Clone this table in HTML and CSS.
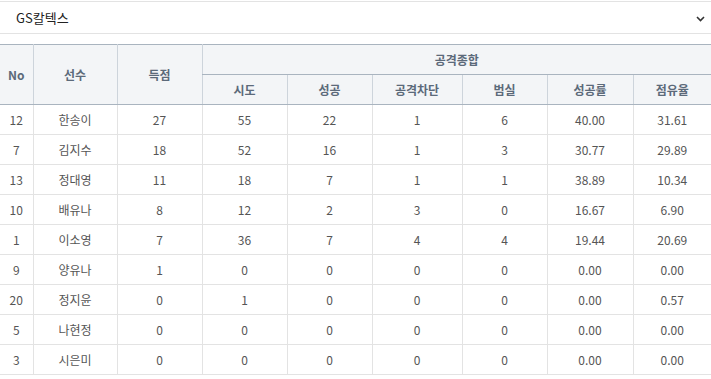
FILE: index.html
```html
<!DOCTYPE html>
<html lang="ko">
<head>
<meta charset="utf-8">
<link rel="stylesheet" href="styles.css">
</head>
<body>
<div class="team-select">
  <span class="team-name">GS칼텍스</span>
  <svg class="chevron" width="9" height="6" viewBox="0 0 9 6"><path d="M1 1 L4.5 4.5 L8 1" fill="none" stroke="#333" stroke-width="1.6"/></svg>
</div>
<table class="stats">
  <colgroup>
    <col style="width:33px"><col style="width:84px"><col style="width:85px"><col style="width:85px"><col style="width:85px"><col style="width:90px"><col style="width:85px"><col style="width:86px"><col style="width:78px">
  </colgroup>
  <thead>
    <tr>
      <th rowspan="2">No</th>
      <th rowspan="2">선수</th>
      <th rowspan="2">득점</th>
      <th colspan="6" class="group">공격종합</th>
    </tr>
    <tr>
      <th>시도</th><th>성공</th><th>공격차단</th><th>범실</th><th>성공률</th><th>점유율</th>
    </tr>
  </thead>
  <tbody>
    <tr><td>12</td><td>한송이</td><td>27</td><td>55</td><td>22</td><td>1</td><td>6</td><td>40.00</td><td>31.61</td></tr>
    <tr><td>7</td><td>김지수</td><td>18</td><td>52</td><td>16</td><td>1</td><td>3</td><td>30.77</td><td>29.89</td></tr>
    <tr><td>13</td><td>정대영</td><td>11</td><td>18</td><td>7</td><td>1</td><td>1</td><td>38.89</td><td>10.34</td></tr>
    <tr><td>10</td><td>배유나</td><td>8</td><td>12</td><td>2</td><td>3</td><td>0</td><td>16.67</td><td>6.90</td></tr>
    <tr><td>1</td><td>이소영</td><td>7</td><td>36</td><td>7</td><td>4</td><td>4</td><td>19.44</td><td>20.69</td></tr>
    <tr><td>9</td><td>양유나</td><td>1</td><td>0</td><td>0</td><td>0</td><td>0</td><td>0.00</td><td>0.00</td></tr>
    <tr><td>20</td><td>정지윤</td><td>0</td><td>1</td><td>0</td><td>0</td><td>0</td><td>0.00</td><td>0.57</td></tr>
    <tr><td>5</td><td>나현정</td><td>0</td><td>0</td><td>0</td><td>0</td><td>0</td><td>0.00</td><td>0.00</td></tr>
    <tr><td>3</td><td>시은미</td><td>0</td><td>0</td><td>0</td><td>0</td><td>0</td><td>0.00</td><td>0.00</td></tr>
  </tbody>
</table>
</body>
</html>
```
FILE: styles.css
```css
html, body {
  margin: 0;
  padding: 0;
  background: #fff;
}
body {
  font-family: "Noto Sans CJK KR", "Liberation Sans", sans-serif;
  font-size: 12px;
  color: #555;
  padding-top: 1px;
}
.team-select {
  height: 31px;
  border-top: 1px solid #e3e3e3;
  border-bottom: 1px solid #e3e3e3;
  display: flex;
  align-items: center;
  justify-content: space-between;
  padding: 0 6px 0 16px;
  margin-bottom: 10px;
}
.team-name {
  color: #222;
  font-size: 13px;
}
.chevron {
  margin-top: 2px;
}
.stats {
  width: 711px;
  border-collapse: collapse;
  table-layout: fixed;
  border-top: 1px solid #a9b4bf;
}
.stats th {
  background: #f3f5f7;
  color: #5c6a7a;
  font-weight: bold;
  height: 29px;
  padding: 0;
  text-align: center;
  border-left: 1px solid #cdd4db;
  border-bottom: 1px solid #a9b4bf;
}
.stats th:first-child {
  border-left: none;
}
.stats thead tr:nth-child(2) th:first-child {
  border-left: 1px solid #cdd4db;
}
.stats td {
  height: 29px;
  padding: 0;
  text-align: center;
  border-left: 1px solid #e3e3e3;
  border-bottom: 1px solid #e3e3e3;
  color: #555;
}
.stats td:first-child {
  border-left: none;
}
```
